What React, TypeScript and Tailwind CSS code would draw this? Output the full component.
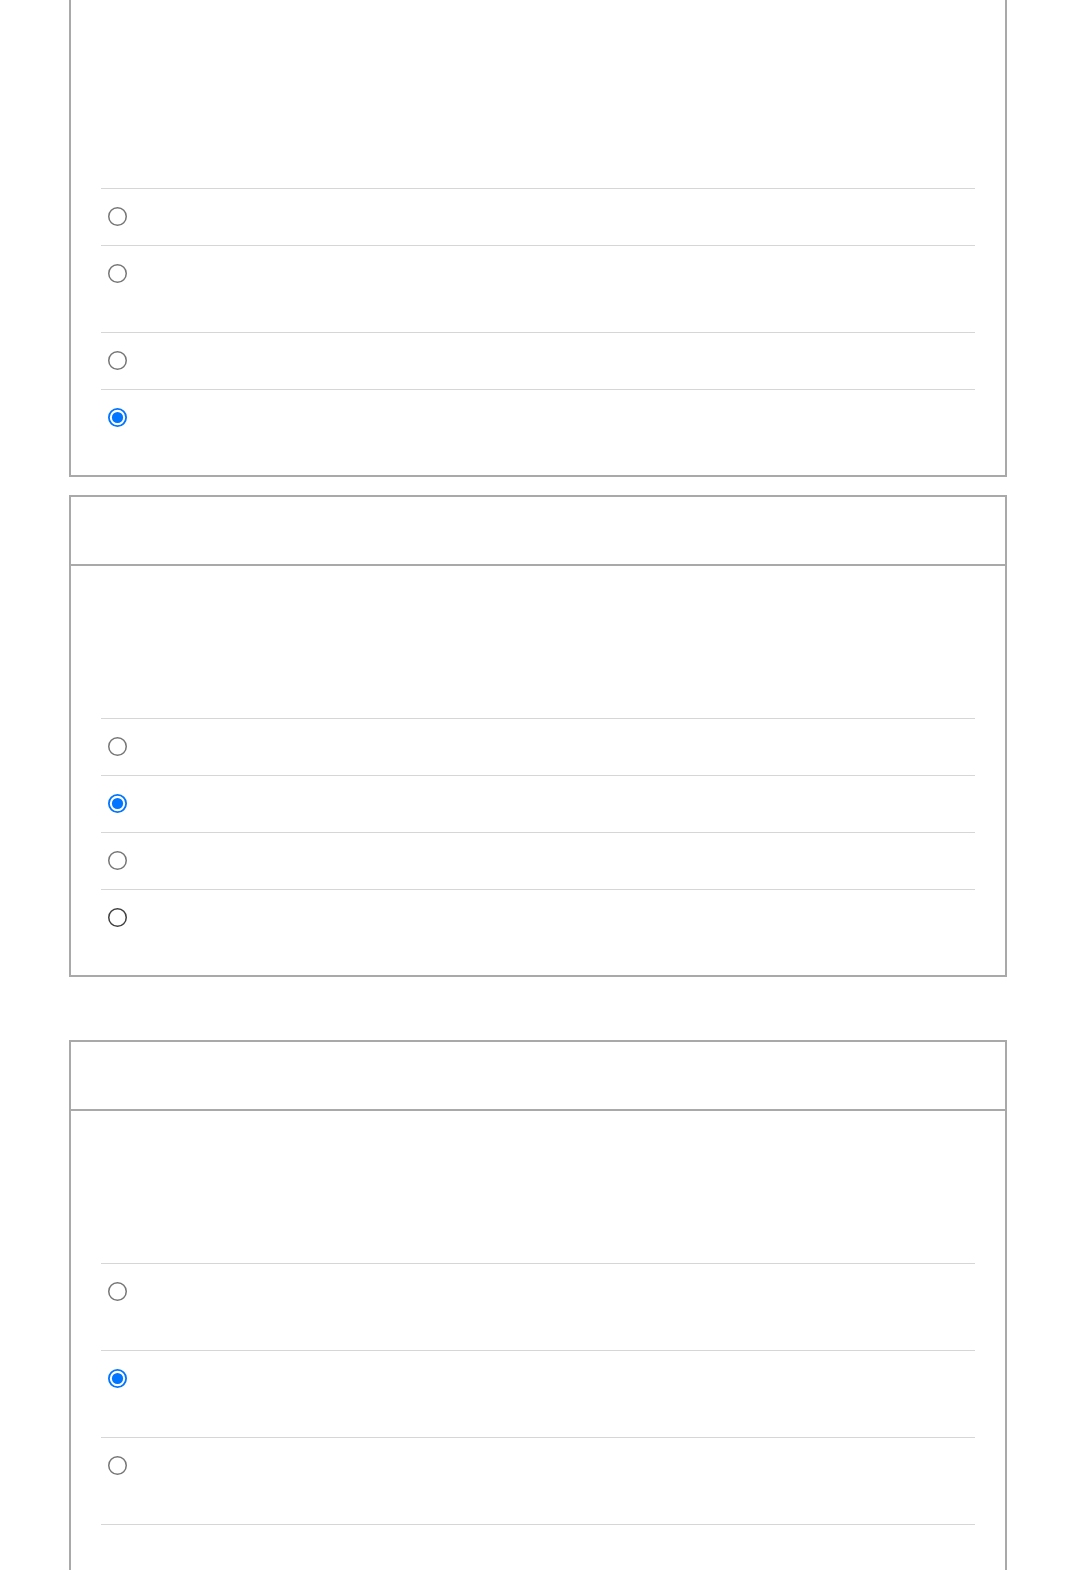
import React from "react";

type RowProps = { checked?: boolean; tall?: boolean; dark?: boolean };

function Radio({ checked, dark }: { checked?: boolean; dark?: boolean }) {
  return (
    <svg width="19" height="19" viewBox="0 0 19 19" className="block shrink-0">
      {checked ? (
        <>
          <circle cx="9.5" cy="9.5" r="8.6" fill="#fff" stroke="#0075ff" strokeWidth="1.8" />
          <circle cx="9.5" cy="9.5" r="5.6" fill="#0075ff" />
        </>
      ) : (
        <circle
          cx="9.5"
          cy="9.5"
          r="8.75"
          fill="#fff"
          stroke={dark ? "#3f3f3f" : "#767676"}
          strokeWidth="1.5"
        />
      )}
    </svg>
  );
}

function Row({ checked, tall, dark }: RowProps) {
  return (
    <div
      className={
        "border-t border-[#d6d6d6] pl-[7px] pt-[18px] " +
        (tall ? "pb-[49px]" : "pb-[19px]")
      }
    >
      <Radio checked={checked} dark={dark} />
    </div>
  );
}

function Box({
  rows,
  last,
}: {
  rows: RowProps[];
  last?: boolean;
}) {
  return (
    <div className="border-2 border-[#a9a9a9] bg-white">
      <div className="h-[69px] border-b-2 border-[#a9a9a9]" />
      <div className={"px-[30px] pt-[152px] " + (last ? "pb-[60px]" : "pb-[29px]")}>
        {rows.map((r, i) => (
          <Row key={i} {...r} />
        ))}
        {last && <div className="border-t border-[#d6d6d6]" />}
      </div>
    </div>
  );
}

export default function App() {
  return (
    <div className="min-h-[1570px] bg-white font-['Liberation_Sans',sans-serif]">
      <div className="mx-auto w-[938px]">
        <div className="border-x-2 border-b-2 border-[#a9a9a9] bg-white px-[30px] pt-[188px] pb-[29px]">
          <Row />
          <Row tall />
          <Row />
          <Row checked />
        </div>
        <div className="mt-[18px]">
          <Box rows={[{}, { checked: true }, {}, { dark: true }]} />
        </div>
        <div className="mt-[63px]">
          <Box rows={[{ tall: true }, { checked: true, tall: true }, { tall: true }]} last />
        </div>
      </div>
    </div>
  );
}
